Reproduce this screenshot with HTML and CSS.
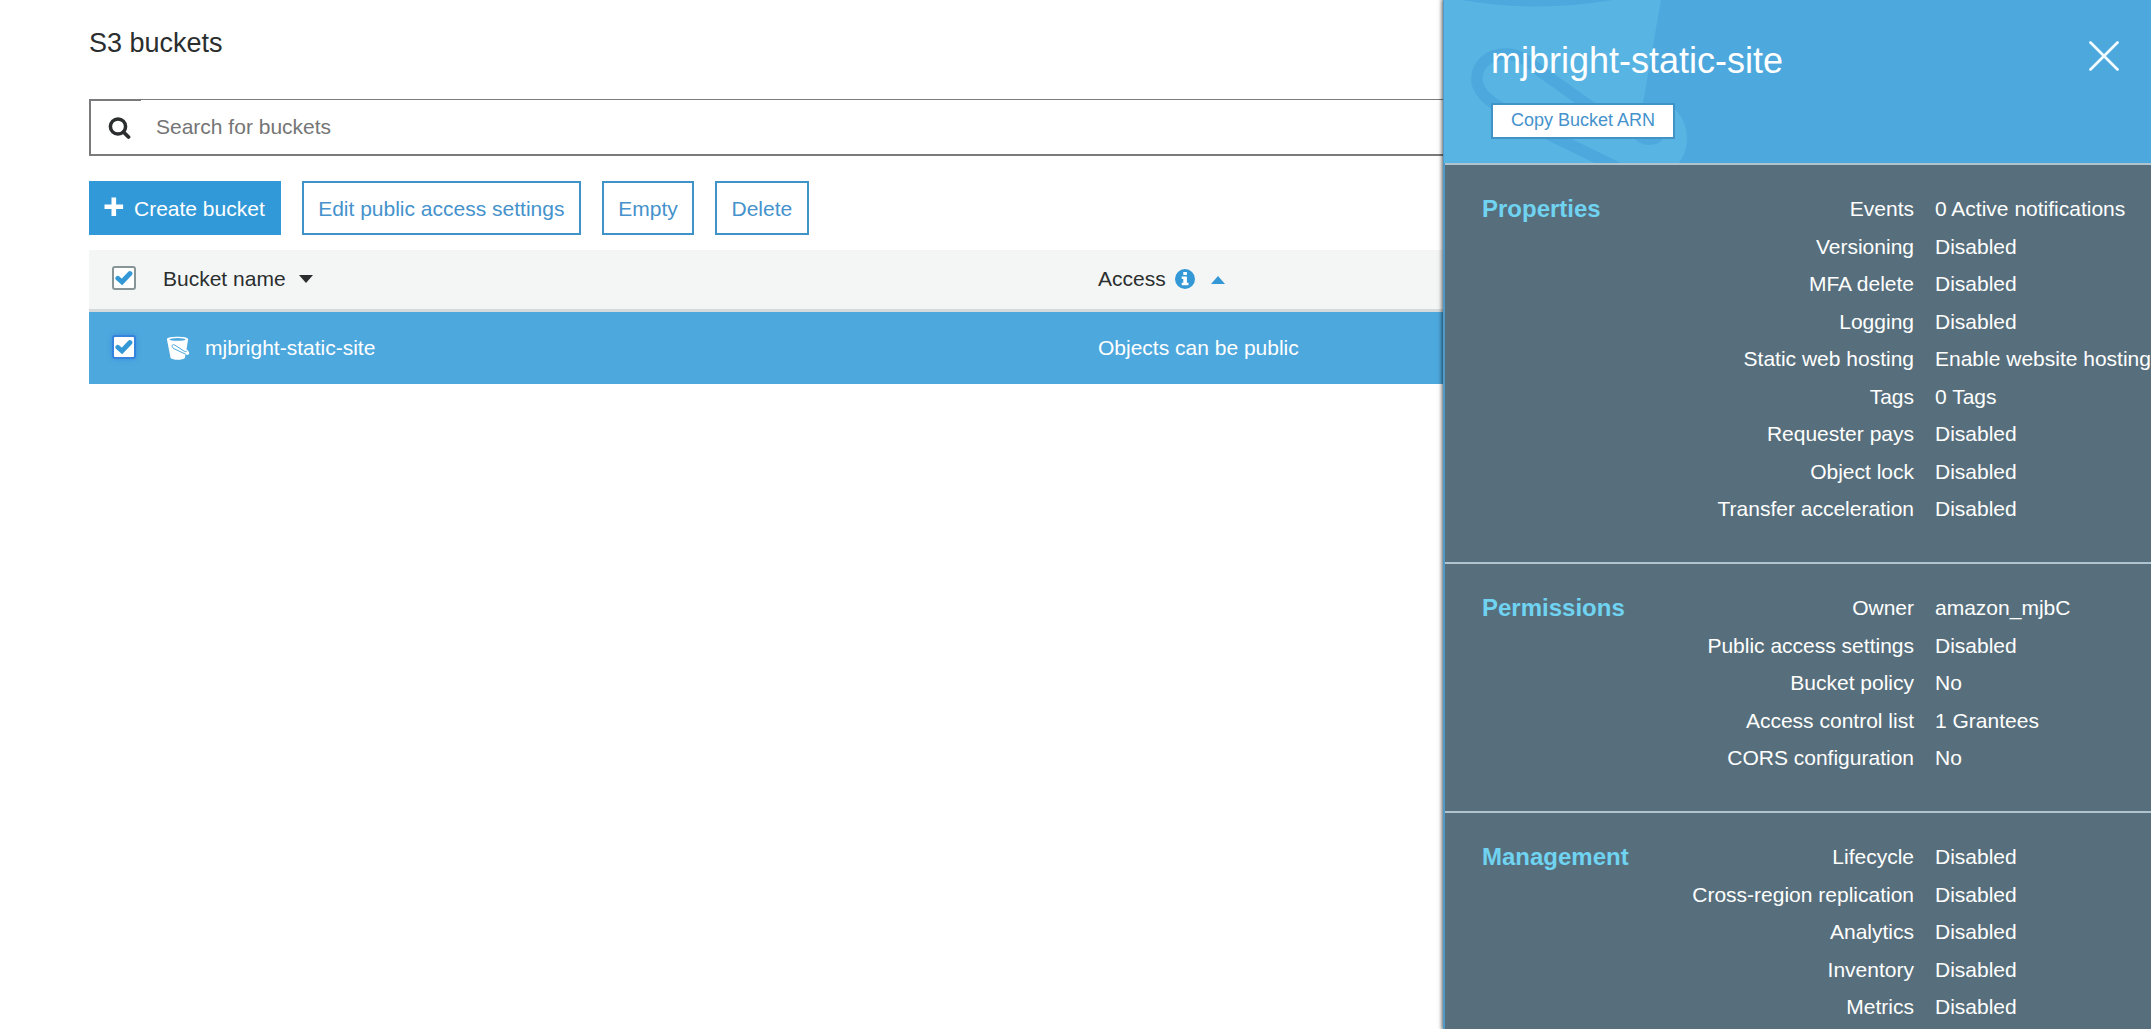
FILE: index.html
```html
<!DOCTYPE html>
<html lang="en">
<head>
<meta charset="utf-8">
<title>S3 buckets</title>
<link rel="stylesheet" href="styles.css">
</head>
<body>
<div class="app">
  <main class="main">
    <h1 class="title">S3 buckets</h1>
    <div class="search">
      <span class="search-icon"><svg width="23" height="23" viewBox="0 0 23 23"><circle cx="10" cy="9.5" r="7.600" fill="none" stroke="#2b2e2e" stroke-width="3.500"/><path d="M15.500 15l5 5" stroke="#2b2e2e" stroke-width="3.800" stroke-linecap="round"/></svg></span>
      <span class="search-field">Search for buckets</span>
    </div>
    <div class="actions">
      <button class="btn primary"><svg width="20" height="20" viewBox="0 0 20 20"><path d="M7.500 .5h4.600v7h7v4.600h-7v7H7.500v-7h-7V7.500h7z" fill="#fff"/></svg><span>Create bucket</span></button>
      <button class="btn">Edit public access settings</button>
      <button class="btn">Empty</button>
      <button class="btn">Delete</button>
    </div>
    <div class="row head">
      <span class="check"><svg width="18" height="16" viewBox="0 0 18 16"><path d="M2.800 8.300l4.200 3.700L15 3.500" fill="none" stroke="#3498d6" stroke-width="4.800" stroke-linecap="round"/></svg></span>
      <span class="name">Bucket name<svg class="caret-down" width="14" height="8" viewBox="0 0 14 8"><path d="M0 0h14L7 8z" fill="#2b2e2e"/></svg></span>
      <span class="access">Access<svg class="info" width="20" height="20" viewBox="0 0 20 20"><circle cx="10" cy="10" r="10" fill="#3498d6"/><path d="M8.300 3h3.600v3H8.300zM6.700 7.500h5.200v6.300h1.600v2.400H6.700v-2.400h1.600V10H6.700z" fill="#fff"/></svg><svg class="caret-up" width="14" height="8" viewBox="0 0 14 8"><path d="M0 8h14L7 0z" fill="#3498d6"/></svg></span>
    </div>
    <div class="row selected">
      <span class="check focus"><svg width="18" height="16" viewBox="0 0 18 16"><path d="M2.800 8.300l4.200 3.700L15 3.500" fill="none" stroke="#3498d6" stroke-width="4.800" stroke-linecap="round"/></svg></span>
      <span class="name"><svg class="bucket" width="24" height="24" viewBox="0 0 24 24"><path d="M.8 2.800C2-.1 21-.1 22.200 2.800L20.500 13.200C23 15 24.300 18 22 18.800c-.8.200-1.600 0-2.500-.3l-.6 3.400C17 24.300 6.500 24.300 4.600 21.900z" fill="#fff"/><ellipse cx="11.500" cy="3.400" rx="8" ry="1.400" fill="#4da8dd"/><path d="M19.800 18.300L8 12.700C5 11 5.700 7.500 8.700 9l9.500 6.200q2 1 2.500 0" fill="none" stroke="#4da8dd" stroke-width="1"/></svg>mjbright-static-site</span>
      <span class="access">Objects can be public</span>
    </div>
  </main>
  <aside class="panel">
    <header class="panel-head">
      <svg class="watermark" width="260" height="163" viewBox="0 0 260 163"><path d="M0 0H217L199 103L232 110Q243 122 243 138Q243 152 235 163H0z" fill="#57b4e3"/><path d="M18 0Q92 13 168 0z" fill="#4da8dd"/><path d="M186 130Q192 145 205 145Q218 145 226 130z" fill="#4da8dd"/><path d="M174 168L110 137L57 108C41 99 33 90 33 79C33 65 44 54 62 54C76 54 84 61 96 71L141 103L185 132" fill="none" stroke="#4da8dd" stroke-width="11.500"/></svg>
      <div class="panel-title">
        <h2>mjbright-static-site</h2>
        <button class="copy">Copy Bucket ARN</button>
      </div>
      <svg class="close" width="30" height="30" viewBox="0 0 30 30"><path d="M1.500 1.500l27 27M28.500 1.500l-27 27" stroke="#f2fbff" stroke-width="2.700" stroke-linecap="round"/></svg>
    </header>
    <section class="group">
      <h3>Properties</h3>
      <dl>
        <dt>Events</dt><dd>0 Active notifications</dd>
        <dt>Versioning</dt><dd>Disabled</dd>
        <dt>MFA delete</dt><dd>Disabled</dd>
        <dt>Logging</dt><dd>Disabled</dd>
        <dt>Static web hosting</dt><dd>Enable website hosting</dd>
        <dt>Tags</dt><dd>0 Tags</dd>
        <dt>Requester pays</dt><dd>Disabled</dd>
        <dt>Object lock</dt><dd>Disabled</dd>
        <dt>Transfer acceleration</dt><dd>Disabled</dd>
      </dl>
    </section>
    <section class="group">
      <h3>Permissions</h3>
      <dl>
        <dt>Owner</dt><dd>amazon_mjbC</dd>
        <dt>Public access settings</dt><dd>Disabled</dd>
        <dt>Bucket policy</dt><dd>No</dd>
        <dt>Access control list</dt><dd>1 Grantees</dd>
        <dt>CORS configuration</dt><dd>No</dd>
      </dl>
    </section>
    <section class="group">
      <h3>Management</h3>
      <dl>
        <dt>Lifecycle</dt><dd>Disabled</dd>
        <dt>Cross-region replication</dt><dd>Disabled</dd>
        <dt>Analytics</dt><dd>Disabled</dd>
        <dt>Inventory</dt><dd>Disabled</dd>
        <dt>Metrics</dt><dd>Disabled</dd>
      </dl>
    </section>
  </aside>
</div>
</body>
</html>
```
FILE: styles.css
```css
* { box-sizing: border-box; }
body {
  margin: 0;
  overflow: hidden;
  background: #fff;
  color: #2b2e2e;
  font: 21px/30px "Liberation Sans", Arial, sans-serif;
}
h1, h2, h3, dl, dd { margin: 0; font-weight: normal; }
svg { display: block; flex: none; }
button { font: inherit; }
.app { display: flex; height: 1029px; overflow: hidden; }
.main { flex: 1; min-width: 0; padding: 23px 0 0 89px; }
.title { font-size: 27px; line-height: 40px; height: 76px; }
.search {
  display: flex;
  height: 57px;
  border: solid #7b7b7d;
  border-width: 0 0 2px 2px;
}
.search-icon {
  width: 50px;
  padding: 16px 0 0 17px;
  border-top: 2px solid #7b7b7d;
}
.search-field {
  flex: 1;
  padding: 12px 0 0 15px;
  border-top: 1px solid #7b7b7d;
  color: #757575;
}
.actions { display: flex; gap: 21px; margin: 25px 0 15px; }
.btn {
  display: flex;
  align-items: center;
  height: 54px;
  padding: 2px 14.400px 0;
  border: 2px solid #3f93c6;
  background: #fff;
  color: #4592cc;
  white-space: nowrap;
}
.btn.primary {
  gap: 10px;
  padding: 2px 14px 0 13px;
  border-color: #3299d8;
  background: #3299d8;
  color: #fff;
}
.btn.primary svg { margin-top: -4px; }
.row { display: flex; align-items: center; padding-left: 23px; }
.head {
  height: 62px;
  padding-bottom: 2px;
  background: #f4f6f6;
  border-bottom: 3px solid #d5dbdb;
}
.selected { height: 72px; background: #4da8dd; color: #fff; }
.check {
  display: flex;
  align-items: center;
  justify-content: center;
  width: 24px;
  height: 24px;
  margin: -2px 27px 0 0;
  border: 2px solid #879596;
  border-radius: 3px;
  background: #fff;
}
.check.focus { border-color: #3583dc; box-shadow: 0 0 5px #3c8ee0; }
.name, .access { display: flex; align-items: center; }
.name { width: 935px; }
.caret-down { margin: 1px 0 0 13px; }
.info { margin-left: 9px; }
.caret-up { margin: 3px 0 0 16px; }
.bucket { margin: 0 15px 0 3px; }
.panel {
  z-index: 1;
  width: 708px;
  border-left: 2px solid #5199c9;
  background: #576f7c;
  box-shadow: 0 0 4px 1px rgba(0, 0, 0, .65);
  color: #fff;
}
.panel-head {
  position: relative;
  display: flex;
  justify-content: space-between;
  height: 163px;
  padding: 39px 32px 0 46px;
  background: #4da8dd;
}
.watermark { position: absolute; left: -1px; top: 0; }
.panel-title { position: relative; }
h2 { font-size: 36px; line-height: 44px; }
.copy {
  height: 36px;
  width: 184px;
  margin-top: 20px;
  padding: 0 0 3px;
  border: 2px solid #3f93c6;
  background: #fff;
  color: #4592cc;
  font-size: 18px;
  line-height: 28px;
}
.close { margin-top: 2px; }
.group {
  display: flex;
  padding: 25.250px 0 34.250px 37px;
  border-top: 2px solid #b0c4cf;
}
h3 {
  width: 200px;
  color: #6fd3f1;
  font-size: 24px;
  font-weight: bold;
  line-height: 37.500px;
}
dl {
  display: grid;
  grid-template-columns: 232px 216px;
  column-gap: 21px;
  line-height: 37.500px;
  white-space: nowrap;
}
dt { text-align: right; }
```
